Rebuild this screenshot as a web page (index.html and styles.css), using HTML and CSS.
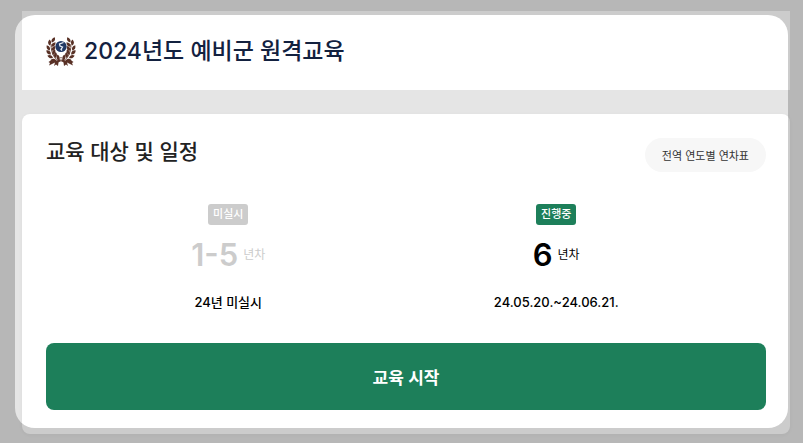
FILE: index.html
```html
<!DOCTYPE html>
<html lang="ko">

<head>
	<meta charset="UTF-8">
	<meta name="viewport" content="width=device-width, initial-scale=1.0">
	<title>2024년도 예비군 원격교육</title>
	<link rel="stylesheet" href="styles.css">
</head>

<body>
	<div class="page">
		<header class="header">
			<svg class="emblem" viewBox="0 0 30 30" aria-hidden="true">
				<defs>
					<path id="leaf" d="M0 0.500C-2.400 -1 -2.500 -3.300 -1 -5.500C1.400 -4 1.700 -1.600 0 0.500Z"/>
					<g id="branch" fill="#593126">
						<path d="M14.5 25.5C9 24 5 18 5 8" fill="none" stroke="#593126" stroke-width="0.8"/>
						<use href="#leaf" transform="translate(6 6) rotate(40)"/>
						<use href="#leaf" transform="translate(3.600 9) rotate(10)"/>
						<use href="#leaf" transform="translate(5.800 10.500) rotate(52)"/>
						<use href="#leaf" transform="translate(3.600 14) rotate(-20)"/>
						<use href="#leaf" transform="translate(6 14.500) rotate(45)"/>
						<use href="#leaf" transform="translate(4.600 18) rotate(-40)"/>
						<use href="#leaf" transform="translate(7 18.500) rotate(30)"/>
						<use href="#leaf" transform="translate(6.600 21.500) rotate(-58)"/>
						<use href="#leaf" transform="translate(9.300 21.500) rotate(14)"/>
						<use href="#leaf" transform="translate(10 24.500) rotate(-76)"/>
						<use href="#leaf" transform="translate(12.500 24) rotate(0)"/>
						<path d="M14 23L11 24.500L5.500 24L2.500 26L4 27L3 29.500L7 27.500L9 26.500L8 30L10 28.500L12 30L12.500 26.500L15 24.500Z"/>
					</g>
				</defs>
				<use href="#branch"/>
				<use href="#branch" transform="translate(30 0) scale(-1 1)"/>
				<circle cx="15" cy="10.500" r="5.600" fill="#203864"/>
				<path d="M17.500 6.500L13.500 8L14 10L16.500 11L15 13.500L16 14.500" fill="none" stroke="#e8edf5" stroke-width="1.300"/>
				<path d="M13 22.500L15 21.500L17 22.500L15 24.500Z" fill="#fff" stroke="#593126" stroke-width="0.700"/>
			</svg>
			<h1>2024년도 예비군 원격교육</h1>
		</header>

		<main class="card">
			<div class="card-head">
				<h2>교육 대상 및 일정</h2>
				<button type="button" class="table-button">전역 연도별 연차표</button>
			</div>

			<div class="schedule">
				<section class="target inactive">
					<span class="badge">미실시</span>
					<p class="year"><strong>1-5</strong> <span>년차</span></p>
					<p class="period">24년 미실시</p>
				</section>
				<section class="target">
					<span class="badge">진행중</span>
					<p class="year"><strong>6</strong> <span>년차</span></p>
					<p class="period">24.05.20.~24.06.21.</p>
				</section>
			</div>

			<button type="button" class="start-button">교육 시작</button>
		</main>
	</div>

	<!-- dims everything outside the rounded area -->
	<div class="spotlight"></div>
</body>

</html>
```

FILE: styles.css
```css
* {
	box-sizing: border-box;
}

body {
	margin: 0;
	padding: 11px 13px 9px 22px;
	background-color: #e5e5e5;
	color: #000;
	font-family: Inter, "Noto Sans CJK KR", sans-serif;
}

h1,
h2,
p {
	margin: 0;
}

button {
	border: none;
	font-family: inherit;
	cursor: pointer;
}

.header {
	display: flex;
	align-items: center;
	gap: 8px;
	padding: 22px 24px 21px;
	background-color: #fff;
}

.emblem {
	width: 30px;
	height: 30px;
}

.header h1 {
	color: #13213f;
	font-size: 23px;
	font-weight: 500;
	line-height: 36px;
}

.card {
	margin-top: 24px;
	padding: 24px;
	background-color: #fff;
	border-radius: 8px;
	box-shadow: 0 1px 4px rgba(0, 0, 0, 0.04);
}

.card-head {
	display: flex;
	justify-content: space-between;
	align-items: flex-start;
}

.card-head h2 {
	color: #222;
	font-size: 21px;
	font-weight: 500;
	line-height: 28px;
}

.table-button {
	height: 34px;
	padding: 0 17px;
	background-color: #f7f7f7;
	border-radius: 17px;
	color: #333;
	font-size: 11px;
}

.schedule {
	display: grid;
	grid-template-columns: 5fr 4fr;
	padding: 32px 64px 31px 0;
}

.target {
	text-align: center;
}

.badge {
	display: inline-block;
	padding: 0 5px;
	background-color: #1d7f5a;
	border-radius: 3px;
	color: #fff;
	font-size: 11px;
	font-weight: 500;
	line-height: 20px;
	height: 21px;
	vertical-align: top;
}

.year {
	display: flex;
	justify-content: center;
	align-items: center;
	gap: 5px;
	margin-top: 8px;
	font-size: 12px;
	line-height: 44px;
}

.year strong {
	font-size: 31px;
	font-weight: 600;
}

.period {
	margin-top: 15px;
	font-size: 13px;
	font-weight: 500;
	line-height: 20px;
}

.inactive .badge {
	background-color: #ccc;
}

.inactive .year {
	color: #ccc;
}

.start-button {
	display: block;
	width: 100%;
	height: 67px;
	background-color: #1d7f5a;
	border-radius: 8px;
	color: #fff;
	font-size: 17px;
	font-weight: 600;
}

.spotlight {
	position: fixed;
	inset: 15px;
	border-radius: 20px;
	box-shadow: 0 0 0 100vmax rgba(0, 0, 0, 0.2);
	pointer-events: none;
}
```
